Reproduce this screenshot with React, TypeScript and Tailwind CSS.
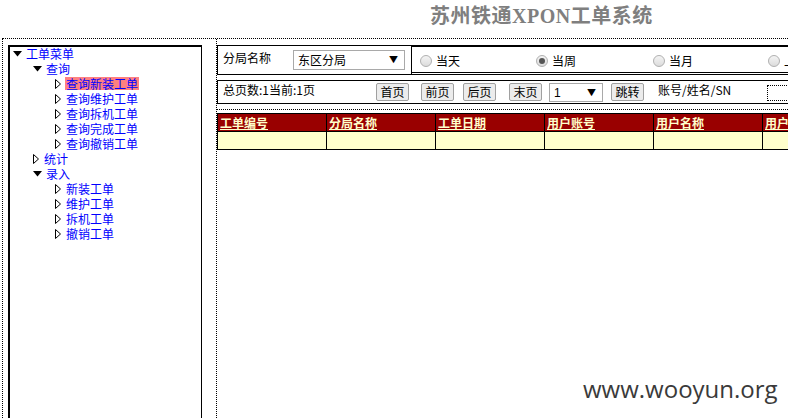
import React from "react";

const cjk = { fontFamily: '"Noto Sans CJK SC", "Liberation Sans", sans-serif' };

function Down() {
  return (
    <svg width="9" height="6" viewBox="0 0 9 6" className="shrink-0">
      <path d="M0 0 H9 L4.5 5.5 Z" fill="#000" />
    </svg>
  );
}

function Right() {
  return (
    <svg width="6" height="10" viewBox="0 0 6 10" className="shrink-0">
      <path d="M0.5 0.5 L5.5 5 L0.5 9.5 Z" fill="#fff" stroke="#000" strokeWidth="1" />
    </svg>
  );
}

function Node({ level, open, label, active }: { level: number; open?: boolean; label: string; active?: boolean }) {
  const pad = level === 0 ? "pl-[3px]" : level === 1 ? "pl-[23px]" : "pl-[45px]";
  return (
    <div className={`flex items-center h-[15px] overflow-hidden ${pad}`}>
      <span className={`${open ? "w-[12px]" : "w-[10px]"} flex items-center`}>{open ? <Down /> : <Right />}</span>
      <span className={`px-[1px] leading-[13px] text-[12px] text-[#0000ff] whitespace-nowrap ${active ? "bg-[#ff8080]" : ""}`}>
        {label}
      </span>
    </div>
  );
}

function Radio({ checked, label, w }: { checked?: boolean; label: string; w: string }) {
  return (
    <div className={`flex items-center shrink-0 ${w}`}>
      <span className="w-[12px] h-[12px] rounded-full border border-[#b0b0b0] bg-gradient-to-b from-[#f4f4f4] to-[#dcdcdc] flex items-center justify-center">
        {checked && <span className="w-[6px] h-[6px] rounded-full bg-[#555]" />}
      </span>
      <span className="ml-[4px] text-[12px] whitespace-nowrap">{label}</span>
    </div>
  );
}

function Btn({ label, ml }: { label: string; ml: string }) {
  return (
    <button className={`${ml} shrink-0 w-[33px] h-[18px] px-0 text-[12px] leading-[16px] bg-[#ececec] border border-[#a0a0a0] rounded-[2px] text-black`}>
      {label}
    </button>
  );
}

export default function App() {
  const cols = ["工单编号", "分局名称", "工单日期", "用户账号", "用户名称", "用户地址"];
  return (
    <div className="w-[788px] h-[418px] overflow-hidden bg-white text-black relative" style={cjk}>
      <div className="h-[38px] pl-[430px] pt-[1px]">
        <span className="text-[20px] font-bold text-[#7f7f7f] tracking-[0.5px]" style={{ fontFamily: '"Liberation Serif", "Noto Sans CJK SC", serif' }}>
          苏州铁通XPON工单系统
        </span>
      </div>

      <div className="ml-[2px] h-[380px] border-t border-l border-dotted border-black flex">
        {/* left tree */}
        <div className="pl-[5px] pt-[6px] w-[213px] shrink-0">
          <div className="w-[194px] h-[400px] border-t-2 border-l-2 border-r border-black">
            <div className="-mt-[1px]">
              <Node level={0} open label="工单菜单" />
              <Node level={1} open label="查询" />
              <Node level={2} label="查询新装工单" active />
              <Node level={2} label="查询维护工单" />
              <Node level={2} label="查询拆机工单" />
              <Node level={2} label="查询完成工单" />
              <Node level={2} label="查询撤销工单" />
              <Node level={1} label="统计" />
              <Node level={1} open label="录入" />
              <Node level={2} label="新装工单" />
              <Node level={2} label="维护工单" />
              <Node level={2} label="拆机工单" />
              <Node level={2} label="撤销工单" />
            </div>
          </div>
        </div>

        {/* right content */}
        <div className="flex-1 min-w-0 border-l border-dotted border-black pt-[6px] text-[12px] overflow-hidden">
          <div className="flex h-[30px] w-[700px]">
            <div className="w-[195px] shrink-0 border border-black flex items-start pt-[4px] pl-[5px] whitespace-nowrap">
              <span className="leading-[14px] mt-[1px]">分局名称</span>
              <div className="ml-[22px] w-[112px] h-[20px] border border-[#a9a9a9] bg-white flex items-center pl-[4px] pr-[6px] justify-between">
                <span>东区分局</span>
                <span className="text-[9px]">▼</span>
              </div>
            </div>
            <div className="flex-1 border-t-2 border-r border-b-[3px] border-double border-black flex items-center pl-[8px] pt-[2px]">
              <Radio label="当天" w="w-[116px]" />
              <Radio label="当周" checked w="w-[117px]" />
              <Radio label="当月" w="w-[115px]" />
              <Radio label="上周" w="w-[60px]" />
            </div>
          </div>

          <div className="mt-[5px] h-[24px] w-[700px] border border-black flex items-start pt-[2px] pl-[5px] whitespace-nowrap">
            <span className="leading-[14px] shrink-0 w-[153px]">总页数:1当前:1页</span>
            <Btn label="首页" ml="ml-0" />
            <Btn label="前页" ml="ml-[12px]" />
            <Btn label="后页" ml="ml-[9px]" />
            <Btn label="末页" ml="ml-[13px]" />
            <div className="ml-[7px] shrink-0 w-[54px] h-[19px] border border-[#a9a9a9] bg-white flex items-center justify-between pl-[4px] pr-[6px]">
              <span style={{ fontFamily: '"Liberation Sans", sans-serif' }}>1</span>
              <span className="text-[9px]">▼</span>
            </div>
            <Btn label="跳转" ml="ml-[8px]" />
            <span className="ml-[14px] leading-[14px] shrink-0 w-[109px]">账号/姓名/SN</span>
            <div className="shrink-0 w-[60px] h-[16px] border border-dotted border-black mt-[2px]" />
          </div>

          <div className="mt-[5px] border-t border-dotted border-black" />

          <table className="mt-[3px] border-collapse" style={{ tableLayout: "fixed" }}>
            <tbody>
              <tr className="bg-[#990000] h-[18px]">
                {cols.map((c) => (
                  <td key={c} className="w-[109px] min-w-[109px] border border-black px-[2px] py-0 text-[12px] font-bold text-[#ffffcc] underline leading-[16px] whitespace-nowrap overflow-hidden">
                    {c}
                  </td>
                ))}
              </tr>
              <tr className="bg-[#ffffcc] h-[18px]">
                {cols.map((c) => (
                  <td key={c} className="border border-black" />
                ))}
              </tr>
            </tbody>
          </table>
        </div>
      </div>

      <div
        className="absolute left-[583px] top-[371px] text-[24px] text-[#3a3a3a]"
        style={{ fontFamily: '"Open Sans", "DejaVu Sans", sans-serif' }}
      >
        www.wooyun.org
      </div>
    </div>
  );
}
